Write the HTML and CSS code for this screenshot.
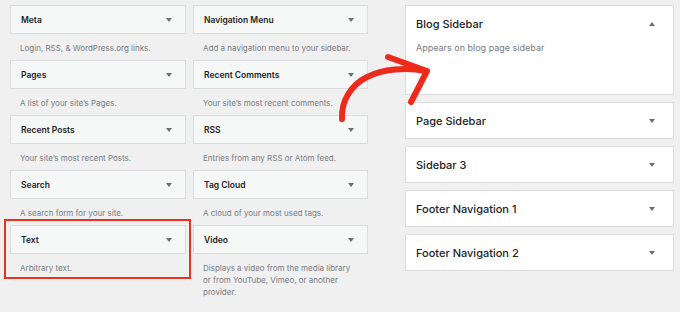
FILE: index.html
```html
<!doctype html>
<html lang="en">
    <head>
        <meta charset="UTF-8" />
        <meta name="viewport" content="width=device-width, initial-scale=1.0" />
        <title>Widgets</title>
        <link rel="stylesheet" href="styles.css">
    </head>
    <body>
        <div class="screen">
            <!-- Available widgets -->
            <div class="widgets">
                <div class="widget">
                    <div class="widget-top"><span class="widget-title">Meta</span><span class="caret"></span></div>
                    <div class="widget-desc">Login, RSS, &amp; WordPress.org links.</div>
                </div>
                <div class="widget">
                    <div class="widget-top"><span class="widget-title">Navigation Menu</span><span class="caret"></span></div>
                    <div class="widget-desc">Add a navigation menu to your sidebar.</div>
                </div>
                <div class="widget">
                    <div class="widget-top"><span class="widget-title">Pages</span><span class="caret"></span></div>
                    <div class="widget-desc">A list of your site’s Pages.</div>
                </div>
                <div class="widget">
                    <div class="widget-top"><span class="widget-title">Recent Comments</span><span class="caret"></span></div>
                    <div class="widget-desc">Your site’s most recent comments.</div>
                </div>
                <div class="widget">
                    <div class="widget-top"><span class="widget-title">Recent Posts</span><span class="caret"></span></div>
                    <div class="widget-desc">Your site’s most recent Posts.</div>
                </div>
                <div class="widget">
                    <div class="widget-top"><span class="widget-title">RSS</span><span class="caret"></span></div>
                    <div class="widget-desc">Entries from any RSS or Atom feed.</div>
                </div>
                <div class="widget">
                    <div class="widget-top"><span class="widget-title">Search</span><span class="caret"></span></div>
                    <div class="widget-desc">A search form for your site.</div>
                </div>
                <div class="widget">
                    <div class="widget-top"><span class="widget-title">Tag Cloud</span><span class="caret"></span></div>
                    <div class="widget-desc">A cloud of your most used tags.</div>
                </div>
                <div class="widget highlighted">
                    <div class="widget-top"><span class="widget-title">Text</span><span class="caret"></span></div>
                    <div class="widget-desc">Arbitrary text.</div>
                </div>
                <div class="widget">
                    <div class="widget-top"><span class="widget-title">Video</span><span class="caret"></span></div>
                    <div class="widget-desc">Displays a video from the media library or from YouTube, Vimeo, or another provider.</div>
                </div>
            </div>

            <!-- Sidebars -->
            <div class="sidebars">
                <div class="sidebar open">
                    <div class="sidebar-top"><span class="sidebar-title">Blog Sidebar</span><span class="caret up"></span></div>
                    <div class="sidebar-desc">Appears on blog page sidebar</div>
                </div>
                <div class="sidebar">
                    <div class="sidebar-top"><span class="sidebar-title">Page Sidebar</span><span class="caret"></span></div>
                </div>
                <div class="sidebar">
                    <div class="sidebar-top"><span class="sidebar-title">Sidebar 3</span><span class="caret"></span></div>
                </div>
                <div class="sidebar">
                    <div class="sidebar-top"><span class="sidebar-title">Footer Navigation 1</span><span class="caret"></span></div>
                </div>
                <div class="sidebar">
                    <div class="sidebar-top"><span class="sidebar-title">Footer Navigation 2</span><span class="caret"></span></div>
                </div>
            </div>

            <!-- Hand-drawn arrow -->
            <svg class="arrow" width="680" height="312" viewBox="0 0 680 312">
                <path d="M342 119 C 341 101, 351 85, 367 77 C 383 69, 405 67, 426 71" />
                <path d="M388 57 L 427 71 L 411 102" />
            </svg>
        </div>
    </body>
</html>
```

FILE: styles.css
```css
body {
    margin: 0;
    background-color: #f0f0f1;
    font-family: Inter, "Liberation Sans", Arial, sans-serif;
    color: #1d2327;
}

.screen {
    position: relative;
    display: flex;
    align-items: flex-start;
    gap: 37px;
    width: 680px;
    height: 312px;
    padding: 5px 6px 0 10px;
    box-sizing: border-box;
}

/* Available widgets grid */
.widgets {
    display: grid;
    grid-template-columns: 176px 175px;
    grid-auto-rows: 55px;
    column-gap: 7px;
}

.widget {
    position: relative;
}

.widget-top {
    display: flex;
    align-items: center;
    justify-content: space-between;
    height: 29px;
    padding: 0 13px 0 10px;
    background-color: #f6f7f7;
    border: 1px solid #dcdcde;
    box-sizing: border-box;
}

.widget-title {
    font-size: 8.5px;
    font-weight: 600;
}

.widget-desc {
    padding: 8px 14px 0 10px;
    font-size: 8px;
    line-height: 12px;
    color: #787c82;
}

.highlighted::after {
    content: "";
    position: absolute;
    top: -6px;
    left: -6px;
    right: -5px;
    bottom: 1px;
    border: 2px solid #e8321f;
}

.caret {
    width: 0;
    height: 0;
    border-left: 3px solid transparent;
    border-right: 3px solid transparent;
    border-top: 4px solid #6b6e72;
}

.caret.up {
    border-top: none;
    border-bottom: 4px solid #6b6e72;
}

/* Sidebars */
.sidebars {
    display: flex;
    flex-direction: column;
    gap: 7px;
    width: 269px;
}

.sidebar {
    background-color: #fff;
    border: 1px solid #dcdcde;
}

.sidebar.open {
    height: 90px;
    box-sizing: border-box;
}

.sidebar-top {
    display: flex;
    align-items: center;
    justify-content: space-between;
    height: 35px;
    padding: 0 18px 0 10px;
}

.sidebar-title {
    font-size: 11px;
    font-weight: 500;
}

.sidebar-desc {
    padding: 1px 10px 0;
    font-size: 9px;
    color: #787c82;
}

.arrow {
    position: absolute;
    top: 0;
    left: 0;
    fill: none;
    stroke: #ee2a1c;
    stroke-width: 6;
    stroke-linecap: round;
    stroke-linejoin: round;
}
```
